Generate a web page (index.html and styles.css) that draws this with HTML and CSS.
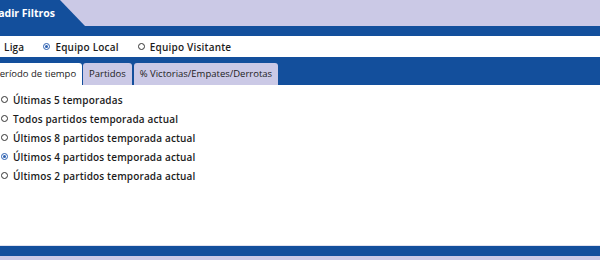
FILE: index.html
```html
<!DOCTYPE html>
<html lang="es">
<head>
    <meta charset="UTF-8">
    <meta name="viewport" content="width=device-width, initial-scale=1.0">
    <title>Filtros</title>
    <link rel="stylesheet" href="styles.css">
</head>
<body>
    <div class="page">
        <div class="filter-head">
            <div class="head-tab">Añadir Filtros</div>
        </div>
        <div class="bar-thin"></div>

        <div class="scope-row">
            <label class="opt"><span class="radio"></span>Liga</label>
            <label class="opt"><span class="radio checked"></span>Equipo Local</label>
            <label class="opt"><span class="radio"></span>Equipo Visitante</label>
        </div>

        <div class="tabs">
            <div class="tab active">Período de tiempo</div>
            <div class="tab">Partidos</div>
            <div class="tab">% Victorias/Empates/Derrotas</div>
        </div>

        <div class="panel">
            <label class="item"><span class="radio"></span>Últimas 5 temporadas</label>
            <label class="item"><span class="radio"></span>Todos partidos temporada actual</label>
            <label class="item"><span class="radio"></span>Últimos 8 partidos temporada actual</label>
            <label class="item"><span class="radio checked"></span>Últimos 4 partidos temporada actual</label>
            <label class="item"><span class="radio"></span>Últimos 2 partidos temporada actual</label>
        </div>

        <div class="bar-bottom"></div>
    </div>
</body>
</html>
```

FILE: styles.css
```css
* {
    margin: 0;
    padding: 0;
    box-sizing: border-box;
}

body {
    font-family: 'Open Sans', 'Liberation Sans', sans-serif;
    background: #cbc9e6;
    color: #1c1c1c;
    overflow: hidden;
}

/* the page is scrolled a little to the right */
.page {
    margin-left: -20px;
    width: 640px;
}

.filter-head {
    height: 26px;
    background: #cbc9e6;
}

.head-tab {
    width: 105px;
    height: 26px;
    background: #134f9c;
    color: #fff;
    font-size: 10.5px;
    font-weight: 700;
    line-height: 26px;
    padding-left: 4px;
    white-space: nowrap;
    clip-path: polygon(0 0, 80px 0, 100% 100%, 0 100%);
}

.bar-thin {
    height: 10px;
    background: #134f9c;
}

.scope-row {
    height: 21px;
    background: #fff;
    display: flex;
    align-items: center;
    gap: 19px;
    padding-left: 12px;
    font-size: 10px;
    font-weight: 600;
    letter-spacing: 0.2px;
}

.opt, .item {
    display: flex;
    align-items: center;
    gap: 5px;
}

.radio {
    width: 7px;
    height: 7px;
    border: 1px solid #333;
    border-radius: 50%;
    display: inline-flex;
    align-items: center;
    justify-content: center;
    flex-shrink: 0;
}

.radio.checked {
    border-color: #2b5fb0;
}

.radio.checked::after {
    content: '';
    width: 3px;
    height: 3px;
    border-radius: 50%;
    background: #2b5fb0;
}

.tabs {
    height: 28px;
    background: #134f9c;
    display: flex;
    align-items: flex-end;
    gap: 2px;
    font-size: 9.5px;
}

.tab {
    height: 22px;
    line-height: 22px;
    padding: 0 6px;
    background: #cbc9e6;
    border-radius: 3px 3px 0 0;
    color: #222;
    white-space: nowrap;
}

.tab.active {
    background: #fff;
    width: 102px;
    padding-left: 14px;
    margin-right: -1px;
}

.panel {
    height: 161px;
    background: #fff;
    padding: 8px 0 0 21px;
    display: flex;
    flex-direction: column;
    gap: 6px;
    font-size: 10px;
    font-weight: 600;
    letter-spacing: 0.15px;
    border-bottom: 1px solid #e2e2ef;
}

.item {
    height: 13px;
}

.bar-bottom {
    height: 10px;
    background: #134f9c;
}
```
